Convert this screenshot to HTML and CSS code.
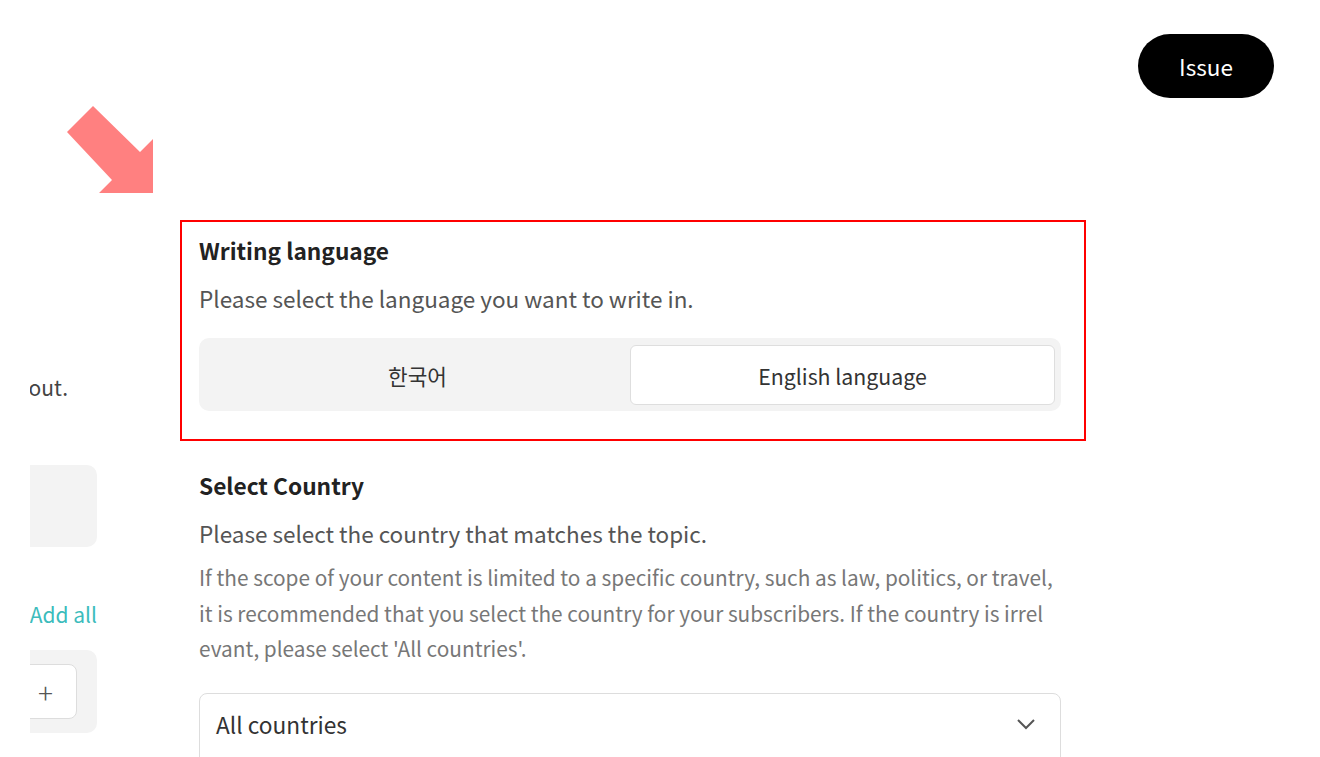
FILE: index.html
```html
<!DOCTYPE html>
<html lang="en">
<head>
    <meta charset="UTF-8">
    <meta name="viewport" content="width=device-width, initial-scale=1.0">
    <title>Write Settings</title>
    <link rel="stylesheet" href="styles.css">
</head>
<body>
    <div class="page">
        <div class="topbar">
            <button class="issue-btn">Issue</button>
        </div>

        <div class="arrow">
            <svg width="90" height="90" viewBox="0 0 90 90">
                <polygon points="27,0 1,26 46,74 33,87 87,87 87,33 74,46" fill="#ff8080"/>
            </svg>
        </div>

        <div class="main">
            <!-- cut off side panel -->
            <div class="side">
                <div class="side-inner">
                    <p class="side-text">Choose the topics you want to write about.</p>
                    <div class="side-box"></div>
                    <div class="side-link">Add all</div>
                    <div class="side-box side-box-add">
                        <span class="add-btn">+</span>
                    </div>
                </div>
            </div>

            <div class="form">
                <div class="section highlight">
                    <h2>Writing language</h2>
                    <p class="desc">Please select the language you want to write in.</p>
                    <div class="segment">
                        <button class="seg-item">한국어</button>
                        <button class="seg-item active">English language</button>
                    </div>
                </div>

                <div class="section">
                    <h2>Select Country</h2>
                    <p class="desc">Please select the country that matches the topic.</p>
                    <p class="note">If the scope of your content is limited to a specific country, such as law, politics, or travel, it is recommended that you select the country for your subscribers. If the country is irrel evant, please select 'All countries'.</p>
                    <div class="select-box">
                        <span>All countries</span>
                        <svg width="20" height="12" viewBox="0 0 20 12">
                            <polyline points="2,2 10,10 18,2" fill="none" stroke="#555" stroke-width="2"/>
                        </svg>
                    </div>
                </div>
            </div>
        </div>
    </div>
</body>
</html>
```

FILE: styles.css
```css
body {
    margin: 0;
    padding: 0;
    background: #fff;
    font-family: "Noto Sans CJK KR", "Noto Sans", sans-serif;
    color: #222;
}

.page {
    position: relative;
    height: 100vh;
    overflow: hidden;
}

.topbar {
    display: flex;
    justify-content: flex-end;
    padding: 34px 46px 0 0;
}

.issue-btn {
    width: 136px;
    height: 64px;
    border: none;
    border-radius: 32px;
    background: #000;
    color: #fff;
    font-family: inherit;
    font-size: 22.5px;
    cursor: pointer;
}

/* annotation arrow */
.arrow {
    position: absolute;
    left: 66px;
    top: 106px;
}

.main {
    display: flex;
    margin-top: 122px;
}

.side {
    width: 67px;
    margin-left: 30px;
    display: flex;
    justify-content: flex-end;
    overflow: hidden;
    flex-shrink: 0;
}

.side-inner {
    width: 420px;
    flex-shrink: 0;
    display: flex;
    flex-direction: column;
    align-items: flex-end;
}

.side-text {
    margin: 152px 29px 0 0;
    font-size: 21px;
    line-height: 30px;
    color: #444;
    white-space: nowrap;
}

.side-box {
    width: 100%;
    height: 82px;
    margin-top: 63px;
    background: #f3f3f3;
    border-radius: 10px;
}

.side-link {
    margin-top: 52px;
    font-size: 21px;
    line-height: 30px;
    color: #3cbcbc;
}

.side-box-add {
    margin-top: 21px;
    height: 83px;
    display: flex;
    justify-content: flex-end;
    align-items: center;
}

.add-btn {
    width: 100px;
    height: 55px;
    margin-right: 20px;
    background: #fff;
    border: 1px solid #ddd;
    border-radius: 8px;
    display: flex;
    align-items: center;
    justify-content: flex-end;
    padding-right: 23px;
    box-sizing: border-box;
    font-size: 28px;
    font-weight: 300;
    color: #555;
}

.form {
    width: 906px;
    margin-left: 83px;
}

.section {
    padding: 0 25px 0 19px;
}

.section.highlight {
    border: 2px solid #f00;
    padding: 13px 23px 28px 17px;
    margin-bottom: 29px;
}

.section h2 {
    margin: 0;
    font-size: 22.7px;
    line-height: 32px;
    font-weight: 700;
    color: #222;
}

.desc {
    margin: 15px 0 0;
    font-size: 22.5px;
    line-height: 32px;
    color: #555;
}

.segment {
    display: flex;
    margin-top: 24px;
    padding: 7px 6px 6px;
    background: #f3f3f3;
    border-radius: 10px;
}

.seg-item {
    flex: 1;
    height: 60px;
    border: 1px solid transparent;
    border-radius: 6px;
    background: transparent;
    font-family: inherit;
    font-size: 21.3px;
    color: #333;
    cursor: pointer;
}

.seg-item.active {
    background: #fff;
    border-color: #dedede;
}

.note {
    margin: 11px 0 0;
    font-size: 20.8px;
    line-height: 35.5px;
    color: #777;
}

.select-box {
    display: flex;
    justify-content: space-between;
    align-items: flex-start;
    height: 80px;
    margin-top: 26px;
    padding: 15px 24px 0 16px;
    border: 1px solid #ddd;
    border-radius: 8px;
    font-size: 22.7px;
    line-height: 32px;
    color: #333;
}

.select-box svg {
    margin-top: 9px;
}
```
